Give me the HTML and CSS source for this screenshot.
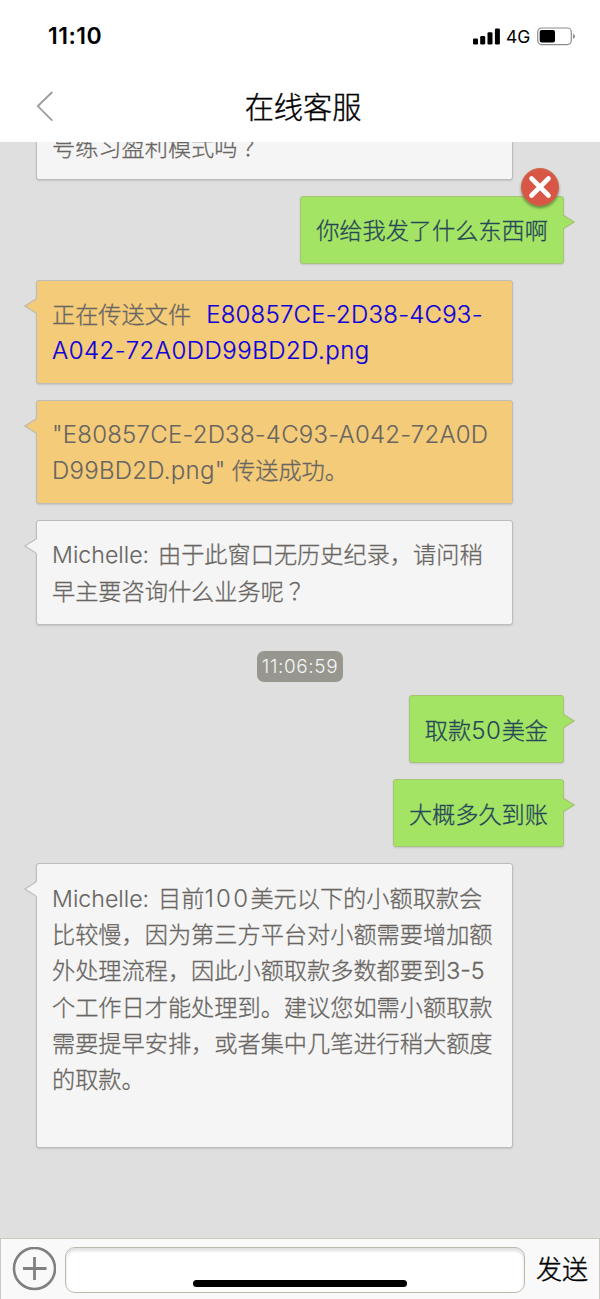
FILE: index.html
```html
<!DOCTYPE html>
<html lang="zh-CN">
<head>
<meta charset="utf-8">
<title>在线客服</title>
<link rel="stylesheet" href="styles.css">
</head>
<body>
<div class="screen">
  <div class="status">
    <span class="clock">11:10</span>
    <span class="indicators">
      <svg width="28" height="17" viewBox="0 0 28 17"><rect x="0" y="10.5" width="5" height="6" rx="1.2"/><rect x="7.2" y="8" width="5" height="8.500" rx="1.2"/><rect x="14.500" y="4.200" width="5" height="12.300" rx="1.2"/><rect x="21.900" y=".5" width="5" height="16" rx="1.2"/></svg>
      <span class="network">4G</span>
      <svg width="39" height="19" viewBox="0 0 39 19"><rect x=".7" y="1" width="33.600" height="16.600" rx="4" fill="none" stroke="#8c8c8c" stroke-width="1.200"/><rect x="2.700" y="3" width="15.300" height="12.500" rx="2"/><path d="M36 6.500q4 2.800 0 5.600z" fill="#8c8c8c"/></svg>
    </span>
  </div>
  <header class="header">
    <svg class="back" width="18" height="32" viewBox="0 0 18 32"><path d="M16.300 1 1.800 15.100l14.500 14.500" fill="none" stroke="#9a9a9a" stroke-width="1.800"/></svg>
    <h1 class="title">在线客服</h1>
  </header>
  <main class="chat">
    <div class="bubble agent clipped"><p>号练习盈利模式吗<span class="q">？</span></p></div>
    <div class="bubble user">
      <p>你给我发了什么东西啊</p>
      <svg class="tail" width="13" height="18" viewBox="0 0 13 18"><path d="M0 2h1l11 7-11 7H0z" fill="#a4e465"/><path d="m1 2 11 7-11 7" fill="none" stroke="#a8c373" stroke-width="1.300"/></svg>
      <svg class="fail" width="44" height="44" viewBox="0 0 44 44"><circle cx="22" cy="21" r="18.500" fill="#d75645" stroke="#cf6945"/><path d="m13.500 12.500 17 17m0-17-17 17" stroke="#fff" stroke-width="4.600" stroke-linecap="round"/></svg>
    </div>
    <div class="bubble agent file">
      <svg class="tail" width="13" height="18" viewBox="0 0 13 18"><path d="M13 2h-1L1 9l11 7h1z" fill="#f4cb78"/><path d="M12 2 1 9l11 7" fill="none" stroke="#c1bca9" stroke-width="1.300"/></svg>
      <p>正在传送文件<a class="link l1">E80857CE-2D38-4C93-</a></p>
      <p><a class="link l2">A042-72A0DD99BD2D.png</a></p>
    </div>
    <div class="bubble agent file">
      <svg class="tail" width="13" height="18" viewBox="0 0 13 18"><path d="M13 2h-1L1 9l11 7h1z" fill="#f4cb78"/><path d="M12 2 1 9l11 7" fill="none" stroke="#c1bca9" stroke-width="1.300"/></svg>
      <p><span class="l3">"E80857CE-2D38-4C93-A042-72A0D</span></p>
      <p><span class="l4">D99BD2D.png"</span> 传送成功。</p>
    </div>
    <div class="bubble agent">
      <svg class="tail" width="13" height="18" viewBox="0 0 13 18"><path d="M13 2h-1L1 9l11 7h1z" fill="#f5f5f5"/><path d="M12 2 1 9l11 7" fill="none" stroke="#c0c0bd" stroke-width="1.300"/></svg>
      <p><span class="name">Michelle:</span>由于此窗口无历史纪录，请问稍</p>
      <p>早主要咨询什么业务呢<span class="q">？</span></p>
    </div>
    <time class="stamp">11:06:59</time>
    <div class="bubble user">
      <p>取款<span class="num2">50</span>美金</p>
      <svg class="tail" width="13" height="18" viewBox="0 0 13 18"><path d="M0 2h1l11 7-11 7H0z" fill="#a4e465"/><path d="m1 2 11 7-11 7" fill="none" stroke="#a8c373" stroke-width="1.300"/></svg>
    </div>
    <div class="bubble user">
      <p>大概多久到账</p>
      <svg class="tail" width="13" height="18" viewBox="0 0 13 18"><path d="M0 2h1l11 7-11 7H0z" fill="#a4e465"/><path d="m1 2 11 7-11 7" fill="none" stroke="#a8c373" stroke-width="1.300"/></svg>
    </div>
    <div class="bubble agent long">
      <svg class="tail" width="13" height="18" viewBox="0 0 13 18"><path d="M13 2h-1L1 9l11 7h1z" fill="#f5f5f5"/><path d="M12 2 1 9l11 7" fill="none" stroke="#c0c0bd" stroke-width="1.300"/></svg>
      <p><span class="name">Michelle:</span>目前<span class="num3">100</span>美元以下的小额取款会</p>
      <p>比较慢，因为第三方平台对小额需要增加额</p>
      <p>外处理流程，因此小额取款多数都要到3-5</p>
      <p>个工作日才能处理到。建议您如需小额取款</p>
      <p>需要提早安排，或者集中几笔进行稍大额度</p>
      <p>的取款。</p>
    </div>
  </main>
  <footer class="composer">
    <svg class="add" width="44" height="44" viewBox="0 0 44 44"><circle cx="22.500" cy="21.500" r="20.500" fill="none" stroke="#808080" stroke-width="2.600"/><path d="M11 21.500h23.500M22.500 10v23" stroke="#808080" stroke-width="2.800"/></svg>
    <div class="input"><span class="home"></span></div>
    <span class="send">发送</span>
  </footer>
</div>
</body>
</html>
```
FILE: styles.css
```css
* { box-sizing: border-box; }
body { margin: 0; font-family: Inter, "Noto Sans CJK SC", sans-serif; }
svg { display: block; }
.screen { width: 600px; height: 1299px; display: flex; flex-direction: column; overflow: hidden; background: #fff; }
.status { height: 72px; flex: none; display: flex; justify-content: space-between; align-items: center; padding: 0 24px 0 48px; }
.clock { font-size: 23px; font-weight: 600; line-height: 28px; letter-spacing: .5px; }
.indicators { display: flex; align-items: center; }
.network { font-size: 17.500px; font-weight: 400; line-height: 20px; margin: 2px 7px 0 5px; width: 24px; white-space: nowrap; }
.header { height: 70px; flex: none; display: flex; align-items: center; padding: 0 36px 0 36px; }
.title { flex: 1; margin: 1px 12px 0 0; text-align: center; font-size: 29.200px; font-weight: 300; line-height: 44px; -webkit-text-stroke: .4px; }
.chat { flex: 1; min-height: 0; overflow: hidden; background: #dfdfdf; display: flex; flex-direction: column; align-items: flex-start; gap: 16px; padding: 0 36px; }
.bubble { position: relative; flex: none; border: 1.500px solid #bcbcb9; border-radius: 3px; padding: 16px 15px 13.500px; box-shadow: 0 1px 2px rgba(0,0,0,.12); color: #686562; font-size: 23.200px; font-weight: 300; -webkit-text-stroke: .3px; }
.bubble p { margin: 0; height: 36.300px; line-height: 36.300px; white-space: nowrap; }
.agent { width: 477px; background: #f5f5f5; min-height: 104.400px; }
.clipped { margin-top: -31px; min-height: 0; height: 68.500px; padding-top: 18px; }
.file { background: #f4cb78; }
.user { align-self: flex-end; background: #a4e465; border-color: #a8c373; color: #264758; height: 68px; }
.tail { position: absolute; top: 16px; }
.agent .tail { left: -13px; }
.user .tail { right: -12px; }
.fail { position: absolute; right: 1px; top: -31px; filter: drop-shadow(0 2px 1.500px rgba(0,0,0,.4)); }
.q { margin-left: 5px; }
.l3, .l4, .num2, .num3, .name { -webkit-text-stroke: .1px; }
.link, .l3, .l4, .num2, .num3 { font-size: 24px; }
.link { color: #0d00dc; -webkit-text-stroke: .2px; }
.l1 { margin-left: 15px; letter-spacing: .22px; }
.l2 { letter-spacing: .5px; }
.l3 { letter-spacing: .22px; }
.l4 { letter-spacing: .27px; }
.num2 { letter-spacing: .7px; }
.num3 { letter-spacing: 2.300px; }
.name { display: inline-block; width: 106px; }
.stamp { align-self: center; margin: 10.500px 0 -3px; height: 31px; line-height: 31px; width: 86px; text-align: center; white-space: nowrap; border-radius: 7px; background: #97978f; color: #f5f5f5; font-size: 19px; font-weight: 300; letter-spacing: .6px; }
.stamp ~ .bubble { padding-top: 16.500px; }
.long { height: 284.500px; }
.composer { height: 61px; flex: none; display: flex; align-items: flex-start; padding: 8px 10px 0 11px; background: #f9f9f9; border: 1.500px solid #cbc8bf; border-bottom: 0; }
.input { width: 460px; height: 46px; margin: 0 0 0 9px; border: 1.500px solid #b9b9ac; border-radius: 10px; background: #fff; box-shadow: inset 0 3px 3px rgba(0,0,0,.12); display: flex; justify-content: center; align-items: flex-end; padding: 0 0 5px 10px; }
.home { width: 214px; height: 7px; border-radius: 4px; background: #000; }
.send { margin-left: 11px; font-size: 26px; font-weight: 300; -webkit-text-stroke: .4px; line-height: 45px; white-space: nowrap; }
```
